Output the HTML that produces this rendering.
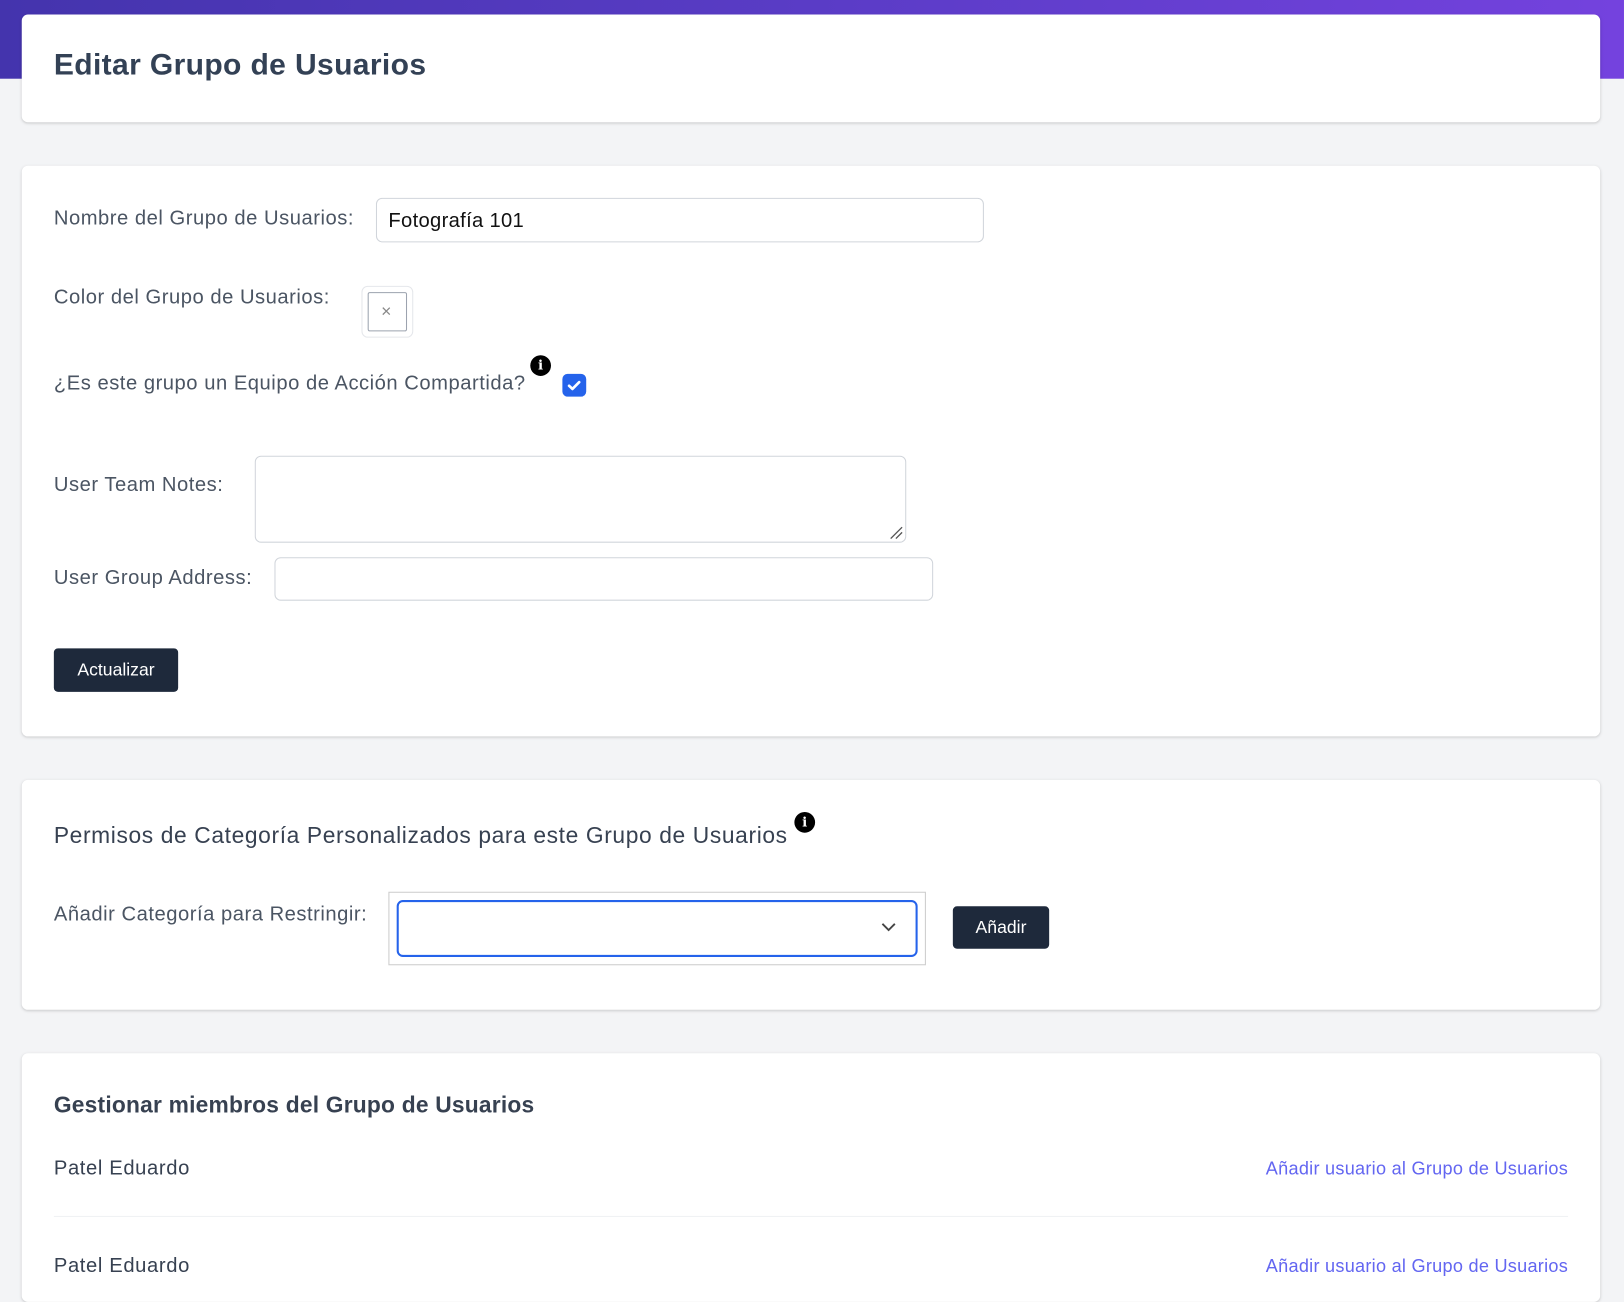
<!DOCTYPE html>
<html><head><meta charset="utf-8">
<style>
html,body{margin:0;padding:0;}
body{width:1624px;height:1284px;overflow:hidden;background:#f3f4f6;font-family:"Liberation Sans",sans-serif;}
#w{position:absolute;left:0;top:0;width:1568px;height:1240px;transform:scale(1.0357);transform-origin:0 0;}
.band{position:absolute;left:0;top:0;width:1568px;height:76px;background:linear-gradient(90deg,#4434ad,#5a3cc6 50%,#7442de);}
.card{position:absolute;left:21px;width:1524px;background:#fff;border-radius:6px;box-shadow:0 1px 3px rgba(0,0,0,.12),0 1px 2px rgba(0,0,0,.06);}
.a{position:absolute;white-space:nowrap;}
.lbl{font-size:19.5px;color:#4b5563;letter-spacing:.5px;}
.inp{position:absolute;border:1px solid #d1d5db;border-radius:6px;background:#fff;box-sizing:border-box;}
.btn{position:absolute;background:#1e293b;color:#fff;border-radius:4px;font-size:17px;display:flex;align-items:center;justify-content:center;}
.info{position:absolute;width:20px;height:20px;border-radius:50%;background:#000;color:#fff;font:bold 13px "DejaVu Serif",serif;display:flex;align-items:center;justify-content:center;}
.h3{font-size:22px;color:#374151;}
.name{font-size:19.5px;color:#374151;letter-spacing:.6px;}
.link{font-size:17.5px;color:#6366f1;right:31px;letter-spacing:.25px;}
</style></head><body><div id="w">
<div class="band"></div>
<div class="card" style="top:14px;height:104px;">
 <div class="a" style="left:31px;top:33px;font-size:29px;font-weight:bold;color:#334155;letter-spacing:.35px;">Editar Grupo de Usuarios</div>
</div>
<div class="card" style="top:160px;height:551px;">
 <div class="a lbl" style="left:31px;top:40px;">Nombre del Grupo de Usuarios:</div>
 <div class="inp" style="left:342px;top:31px;width:587px;height:43px;"><span class="a" style="left:11px;top:10px;font-size:19.5px;color:#111;letter-spacing:.3px;">Fotografía 101</span></div>
 <div class="a lbl" style="left:31px;top:116px;">Color del Grupo de Usuarios:</div>
 <div class="inp" style="left:328px;top:116px;width:50px;height:50px;border-color:#e5e7eb;"></div>
 <div class="inp" style="left:334px;top:122px;width:38px;height:38px;border-color:#9ca3af;border-radius:2px;"><span class="a" style="left:12px;top:8px;font-size:17px;color:#888;">×</span></div>
 <div class="a lbl" style="left:31px;top:199px;">¿Es este grupo un Equipo de Acción Compartida?</div>
 <div class="info" style="left:491px;top:183px;">i</div>
 <div class="a" style="left:522px;top:201px;width:23px;height:22px;background:#2563eb;border-radius:5px;">
  <svg width="23" height="22" viewBox="0 0 23 22"><path d="M6.5 11.5l3.2 3 6.5-6.5" stroke="#fff" stroke-width="2.6" fill="none" stroke-linecap="round" stroke-linejoin="round"/></svg></div>
 <div class="a lbl" style="left:31px;top:297px;">User Team Notes:</div>
 <div class="inp" style="left:225px;top:280px;width:629px;height:84px;">
  <svg class="a" style="right:2px;bottom:2px" width="14" height="14"><path d="M2 13L13 2M7 13L13 7" stroke="#555" stroke-width="1.3"/></svg></div>
 <div class="a lbl" style="left:31px;top:387px;">User Group Address:</div>
 <div class="inp" style="left:244px;top:378px;width:636px;height:42px;"></div>
 <div class="btn" style="left:31px;top:466px;width:120px;height:42px;">Actualizar</div>
</div>
<div class="card" style="top:753px;height:222px;">
 <div class="a h3" style="left:31px;top:41px;letter-spacing:.6px;">Permisos de Categoría Personalizados para este Grupo de Usuarios</div>
 <div class="info" style="left:746px;top:31px;">i</div>
 <div class="a lbl" style="left:31px;top:119px;">Añadir Categoría para Restringir:</div>
 <div class="a" style="left:354px;top:108px;width:517px;height:69px;border:1px solid #ccc;"></div>
 <div class="a" style="left:362px;top:116px;width:499px;height:51px;border:2px solid #2563eb;border-radius:6px;">
  <svg class="a" style="left:465px;top:18px" width="16" height="12"><path d="M2 3l6 6 6-6" stroke="#444" stroke-width="1.8" fill="none"/></svg></div>
 <div class="btn" style="left:899px;top:122px;width:93px;height:41px;">Añadir</div>
</div>
<div class="card" style="top:1017px;height:240px;">
 <div class="a h3" style="left:31px;top:37px;font-weight:bold;letter-spacing:.2px;">Gestionar miembros del Grupo de Usuarios</div>
 <div class="a name" style="left:31px;top:100px;">Patel Eduardo</div>
 <div class="a link" style="top:101px;">Añadir usuario al Grupo de Usuarios</div>
 <div class="a" style="left:31px;top:157px;width:1462px;height:1px;background:#f0f1f3;"></div>
 <div class="a name" style="left:31px;top:194px;">Patel Eduardo</div>
 <div class="a link" style="top:195px;">Añadir usuario al Grupo de Usuarios</div>
</div>
</div></body></html>
